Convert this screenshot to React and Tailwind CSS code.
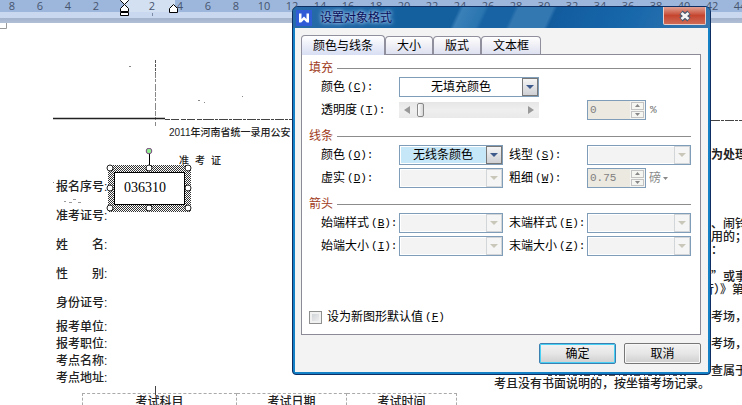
import React, { useState } from "react";

const rulerNumbers = [
  8, 6, 4, 2, "", 2, 4, 6, 8, 10, 12, 14, 16, 18, 20, 22, 24, 26, 28, 30, 32,
  34, 36, 38, 40, 42, 44,
];

const personFields = ["报名序号:", "准考证号:", "姓　　名:", "性　　别:", "身份证号:"];
const examFields = ["报考单位:", "报考职位:", "考点名称:", "考点地址:"];
const tabs = ["颜色与线条", "大小", "版式", "文本框"];

function Ruler() {
  return (
    <header className="relative">
      <div className="flex h-3 bg-[#9db7dc]">
        <div className="-ml-0.5 flex">
          {rulerNumbers.map((n, i) => (
            <span
              key={i}
              className="relative z-10 h-3 w-7 shrink-0 text-center font-['Open_Sans',sans-serif] text-[11px] leading-[11px] text-[#46546e]"
            >
              {n}
            </span>
          ))}
        </div>
      </div>
      <div className="absolute top-0 left-[124px] h-3 w-[51px] bg-[#d3e0f1]" />
      <div className="h-1.5 bg-[#c9d8ef]" />
      <div className="h-[5px] bg-linear-to-b from-[#a3b3cc] to-[#b1bfd6]" />
      {/* indent markers */}
      <svg className="absolute top-0 left-0 z-10" width="190" height="18" fill="#fff" stroke="#000">
        <path d="M120.500 0v.5l4 4 4-4V0" />
        <path d="M124.500 4.500l4 4v3h-8v-3z" />
        <path d="M120.500 12.500h8v3h-8z" />
        <path d="M173.500 4.500l4 4v4h-8v-4z" />
        <path d="M152.500 13v3" stroke="#7d8ca6" />
      </svg>
    </header>
  );
}

// Fold lines and specks of the scanned page
function ScanMarks() {
  return (
    <svg className="absolute top-0 left-0 h-full w-full" fill="none" stroke="#222">
      <path d="M0 5.500h6.500V0" stroke="#999" />
      <path d="M155.500 37v13" stroke="#555" strokeDasharray="3 1" />
      <path d="M155.500 50v53" stroke="#888" strokeDasharray="5 1 3 2 7 1" />
      <path d="M53 95.500h112" strokeWidth="1.500" />
      <path d="M165 96.500h40" strokeDasharray="5 1 8 2" stroke="#444" />
      <path d="M205 96.500h90M711 97.500h40" strokeDasharray="9 1 3 1" stroke="#444" />
      <path d="M129 43.500h2M198 77.500h2M204 79.500h1M242 73.500h1M53 159.500h1" stroke="#888" />
      <path d="M64 178.500h2M69 179.500h3M73 176.500h3M78 179.500h3" stroke="#999" />
      <path d="M548 352.500h138" strokeDasharray="4 3 2 2 6 4 1 3" stroke="#555" />
      <path d="M155.500 363v9" stroke="#444" />
    </svg>
  );
}

function TextFrame() {
  const handles = [
    [5, 20], [44, 20], [83, 20],
    [5, 40], [83, 40],
    [5, 60], [44, 60], [83, 60],
  ];
  return (
    <div className="absolute top-[125px] left-[105px] h-[66px] w-[90px]">
      <div className="absolute top-[17px] left-[3px] h-[47px] w-[83px] bg-[conic-gradient(#333_25%,#fff_0_50%,#333_0_75%,#fff_0)] bg-size-[2px_2px]" />
      <svg className="absolute inset-0" width="90" height="66">
        <rect x="9.500" y="24.500" width="70" height="32" fill="#fff" stroke="#000" />
        <path d="M44.500 5v12" stroke="#000" />
        <circle cx="44" cy="3" r="2.800" fill="#90ee90" stroke="#7b4a80" />
      </svg>
      <input
        aria-label="报名序号"
        defaultValue="036310"
        className="absolute top-[26px] left-[19px] h-7 w-14 bg-transparent font-['Liberation_Serif',serif] text-sm text-black outline-none"
      />
      <svg className="pointer-events-none absolute inset-0" width="90" height="66">
        {handles.map(([x, y]) => (
          <circle key={`${x}-${y}`} cx={x} cy={y} r="3" fill="#fff" stroke="#222" />
        ))}
      </svg>
    </div>
  );
}

function Notice() {
  return (
    <div className="min-w-0 flex-1 overflow-hidden pt-[123px] font-['Noto_Sans_CJK_SC',sans-serif] font-medium whitespace-nowrap">
      <p className="pl-[217px] leading-4 font-bold">为处理</p>
      <div className="mt-[54px] flex flex-col gap-3.5 leading-[13px]">
        <div className="pl-[217px]">
          <p>、闹铃</p>
          <p>用的；</p>
          <p>：</p>
        </div>
        <div>
          <p className="pl-[217px]">”或事</p>
          <p className="pl-[208px]">行）》第</p>
        </div>
        <p className="pl-[217px]">考场，</p>
        <p className="pl-[217px]">考场，</p>
        <div>
          <p className="pl-[217px]">查属于</p>
          <p>考且没有书面说明的，按坐错考场记录。</p>
        </div>
      </div>
    </div>
  );
}

function Document() {
  return (
    <main className="relative flex bg-white text-xs text-[#222]">
      <ScanMarks />
      <div className="w-[494px] shrink-0 pt-[102px]">
        <h1 className="pl-[169px] text-[10px] leading-4 font-medium">2011年河南省统一录用公安</h1>
        <p className="mt-3 flex gap-1.5 pl-[179px] text-[10px] leading-4 font-medium">
          <span>准</span>
          <span>考</span>
          <span>证</span>
        </p>
        <ul className="mt-1 pl-14 font-medium">
          {personFields.map((f) => (
            <li key={f} className="leading-[29px]">{f}</li>
          ))}
        </ul>
        <ul className="mt-px pl-14 font-medium">
          {examFields.map((f) => (
            <li key={f} className="leading-[17px]">{f}</li>
          ))}
        </ul>
        <table className="mt-1.5 ml-[82px] w-[375px] table-fixed border-collapse">
          <thead>
            <tr>
              {["考试科目", "考试日期", "考试时间"].map((h, i) => (
                <th
                  key={h}
                  className={`border border-b-0 border-dashed border-[#aaa] p-0 leading-4 font-medium ${
                    i === 0 ? "w-[154px]" : ""
                  }`}
                >
                  {h}
                </th>
              ))}
            </tr>
          </thead>
        </table>
      </div>
      <Notice />
      <TextFrame />
    </main>
  );
}

function FieldLabel({ text, hotkey, htmlFor, className = "" }) {
  return (
    <label htmlFor={htmlFor} className={`flex items-center gap-0.5 whitespace-nowrap ${className}`}>
      {text}
      <span className="font-['Liberation_Mono',monospace] text-[11px]">
        (<u>{hotkey}</u>){htmlFor !== "asDefault" && ":"}
      </span>
    </label>
  );
}

function Select({ id, value, disabled, wide, highlight }) {
  return (
    <div className={`relative h-5 border border-[#7f9db9] bg-white p-px ${wide ? "w-[140px]" : "w-[104px]"}`}>
      <select
        id={id}
        disabled={disabled}
        className={`block h-4 w-full appearance-none pr-4 leading-4 text-black opacity-100 outline-none [text-align-last:center] ${
          disabled ? "bg-[#f3f3f3]" : highlight ? "bg-[#c5e7f7]" : "bg-white"
        }`}
      >
        <option>{value}</option>
      </select>
      <span
        className={`pointer-events-none absolute top-0 right-0 flex h-[18px] w-4 items-center justify-center border ${
          disabled
            ? "border-[#d2d6d8] bg-[#f5f5f5] text-[#c9c7ba]"
            : "border-[#777] bg-linear-to-b from-[#f5f5f5] to-[#cfd0d4] text-[#3f5b8c]"
        }`}
      >
        <svg width="8" height="4" fill="currentColor">
          <path d="M0 0h8L4 4z" />
        </svg>
      </span>
    </div>
  );
}

function Spinner({ id, value, label }) {
  return (
    <div className="flex h-5 w-[59px] border border-[#7f9db9] bg-[#f5f5f2]">
      <input
        id={id}
        aria-label={label}
        disabled
        defaultValue={value}
        className="w-[42px] bg-[#ebe9e0] pl-0.5 font-['Liberation_Mono',monospace] text-[11px] text-[#808080]"
      />
      <div className="flex flex-1 flex-col gap-px p-px">
        <button disabled aria-label="增加" className="flex flex-1 items-center justify-center border border-[#c3c3c3]">
          <svg width="5" height="3" fill="#888">
            <path d="M0 3h5L2.500 0z" />
          </svg>
        </button>
        <button disabled aria-label="减少" className="flex flex-1 items-center justify-center border border-[#c3c3c3]">
          <svg width="5" height="3" fill="#888">
            <path d="M0 0h5L2.500 3z" />
          </svg>
        </button>
      </div>
    </div>
  );
}

function Section({ title, children }) {
  return (
    <section>
      <h2 className="mb-px flex items-center gap-1 leading-4 text-[#a03c22]">
        {title}
        <span className="h-px flex-1 bg-[#8c8c8c]" />
      </h2>
      <div className="grid grid-cols-[78px_103px_85px_104px] gap-y-[3px] pl-3">{children}</div>
    </section>
  );
}

function FormatDialog() {
  const [activeTab, setActiveTab] = useState(0);
  const [asDefault, setAsDefault] = useState(false);

  return (
    <div
      role="dialog"
      aria-labelledby="dialogTitle"
      className="absolute top-1.5 left-[292px] z-20 w-[419px] overflow-hidden rounded-t-md rounded-b-sm border border-[#0d2f63] bg-[#1480c6] px-0.5 pb-0.5 text-xs text-black"
    >
      <div className="-mx-0.5 flex h-[21px] items-start bg-[linear-gradient(115deg,#2a6cab_0%,#14609f_25%,#14609f_39%,#3a80b8_40%,#2a75b0_45%,#1763a3_46%,#1763a3_52%,#3478b2_53%,#3478b2_61%,#125c9e_62%,#1767ab_80%,#3777ae_100%)] pl-[3px]">
        <svg width="16" height="16" className="mt-[3px]">
          <rect width="16" height="16" fill="#2f5bd7" />
          <path d="M3 3.500h2.500v5.500L8 6.500l2.500 2.500V3.500H13v9h-2.200L8 9.700l-2.800 2.800H3z" fill="#fff" />
        </svg>
        <h1
          id="dialogTitle"
          className="ml-2 flex-1 leading-[22px] text-[#0a0f5a] [text-shadow:0_0_3px_#9cc4ea,0_0_4px_#9cc4ea,0_0_6px_#8ab4dc]"
        >
          设置对象格式
        </h1>
        <button
          aria-label="关闭"
          className="mr-1 flex h-[18px] w-[43px] items-center justify-center rounded-b-xs border border-t-0 border-[#e9cfcb] bg-linear-to-b from-[#e0a093] via-[#c5452f] via-50% to-[#cf6a55]"
        >
          <svg width="14" height="12">
            <path d="M3 2.500l8 7M11 2.500l-8 7" stroke="#4a5a70" strokeWidth="5" />
            <path d="M3.500 3l7 6M10.500 3l-7 6" stroke="#f4f4f4" strokeWidth="2.800" />
          </svg>
        </button>
      </div>

      <div className="bg-[#f3f3f3] pt-[7px] pr-[7px] pb-2 pl-1.5">
        <div role="tablist" className="flex h-[19px] items-end">
          {tabs.map((t, i) => (
            <button
              key={t}
              role="tab"
              aria-selected={i === activeTab}
              onClick={() => setActiveTab(i)}
              className={`rounded-t-sm border border-b-0 border-[#8f8f9d] whitespace-nowrap ${
                i === activeTab
                  ? "relative z-10 -mb-px h-5 bg-linear-to-b from-white to-[#d8def3] px-[11px]"
                  : "h-[18px] bg-linear-to-b from-white via-[#f0f0f6] via-45% to-[#dde0f0] px-[11px]"
              }`}
            >
              {t}
            </button>
          ))}
        </div>

        <div className="border border-[#8b8b98] bg-white pt-[5px] pr-[9px] pb-[9px] pl-[7px]">
          <div className="flex flex-col gap-2">
            <Section title="填充">
              <FieldLabel text="颜色" hotkey="C" htmlFor="fillColor" />
              <div className="col-span-3">
                <Select id="fillColor" value="无填充颜色" wide />
              </div>
              <FieldLabel text="透明度" hotkey="T" htmlFor="opacity" />
              <div className="col-span-2">
                <div className="mt-0.5 flex h-4 w-[140px] items-center bg-linear-to-b from-[#e6e6e6] via-[#efefef] to-[#e9e9e9]">
                  <button aria-label="降低透明度" className="flex h-4 w-4 items-center justify-center">
                    <svg width="6" height="8" fill="#999">
                      <path d="M6 0v8L0 4z" />
                    </svg>
                  </button>
                  <input
                    id="opacity"
                    type="range"
                    defaultValue="0"
                    className="h-4 min-w-0 flex-1 appearance-none bg-transparent px-0.5 [&::-webkit-slider-thumb]:h-3.5 [&::-webkit-slider-thumb]:w-[7px] [&::-webkit-slider-thumb]:appearance-none [&::-webkit-slider-thumb]:rounded-xs [&::-webkit-slider-thumb]:border [&::-webkit-slider-thumb]:border-[#888] [&::-webkit-slider-thumb]:bg-linear-to-r [&::-webkit-slider-thumb]:from-white [&::-webkit-slider-thumb]:to-[#d6d6d6]"
                  />
                  <button aria-label="提高透明度" className="flex h-4 w-4 items-center justify-center">
                    <svg width="6" height="8" fill="#999">
                      <path d="M0 0v8l6-4z" />
                    </svg>
                  </button>
                </div>
              </div>
              <div className="flex items-center gap-1 text-[#707070]">
                <Spinner id="opacityValue" value="0" label="透明度百分比" />
                <span className="font-['Liberation_Mono',monospace] text-[11px]">%</span>
              </div>
            </Section>

            <Section title="线条">
              <FieldLabel text="颜色" hotkey="O" htmlFor="lineColor" />
              <Select id="lineColor" value="无线条颜色" highlight />
              <FieldLabel text="线型" hotkey="S" htmlFor="lineStyle" className="pl-[7px]" />
              <Select id="lineStyle" disabled />
              <FieldLabel text="虚实" hotkey="D" htmlFor="dash" />
              <Select id="dash" disabled />
              <FieldLabel text="粗细" hotkey="W" htmlFor="weight" className="pl-[7px]" />
              <div className="flex items-center gap-[3px] text-[#888]">
                <Spinner id="weight" value="0.75" />
                <button disabled className="flex items-center gap-0.5">
                  磅
                  <svg width="5" height="3" fill="#888">
                    <path d="M0 0h5L2.500 3z" />
                  </svg>
                </button>
              </div>
            </Section>

            <Section title="箭头">
              <FieldLabel text="始端样式" hotkey="B" htmlFor="beginStyle" />
              <Select id="beginStyle" disabled />
              <FieldLabel text="末端样式" hotkey="E" htmlFor="endStyle" className="pl-[7px]" />
              <Select id="endStyle" disabled />
              <FieldLabel text="始端大小" hotkey="I" htmlFor="beginSize" />
              <Select id="beginSize" disabled />
              <FieldLabel text="末端大小" hotkey="Z" htmlFor="endSize" className="pl-[7px]" />
              <Select id="endSize" disabled />
            </Section>
          </div>

          <div className="mt-[53px] flex items-center gap-[5px]">
            <input
              id="asDefault"
              type="checkbox"
              checked={asDefault}
              onChange={(e) => setAsDefault(e.target.checked)}
              className="h-[13px] w-[13px] appearance-none border border-[#8e8f8f] bg-linear-to-br from-[#c9cdd2] to-[#f4f4f4] shadow-[inset_0_0_0_2px_#f1f1f1] checked:bg-[#4b6ea8]"
            />
            <FieldLabel text="设为新图形默认值" hotkey="F" htmlFor="asDefault" />
          </div>
        </div>

        <div className="mt-2 flex justify-end gap-2">
          <button className="h-[21px] w-[77px] rounded-xs border border-[#3c7fb1] bg-linear-to-b from-[#f2f2f2] via-[#e6e6e6] via-50% to-[#cfcfcf] shadow-[inset_0_0_0_1px_#48d1f5]">
            确定
          </button>
          <button className="h-[21px] w-[77px] rounded-xs border border-[#777] bg-linear-to-b from-[#f2f2f2] via-[#e6e6e6] via-50% to-[#cfcfcf] shadow-[inset_0_0_0_1px_#f7f7f7]">
            取消
          </button>
        </div>
      </div>
    </div>
  );
}

function App() {
  return (
    <div className="relative h-screen overflow-hidden bg-white font-['Liberation_Sans','Noto_Sans_CJK_SC',sans-serif]">
      <Ruler />
      <Document />
      <FormatDialog />
    </div>
  );
}

export default App;
